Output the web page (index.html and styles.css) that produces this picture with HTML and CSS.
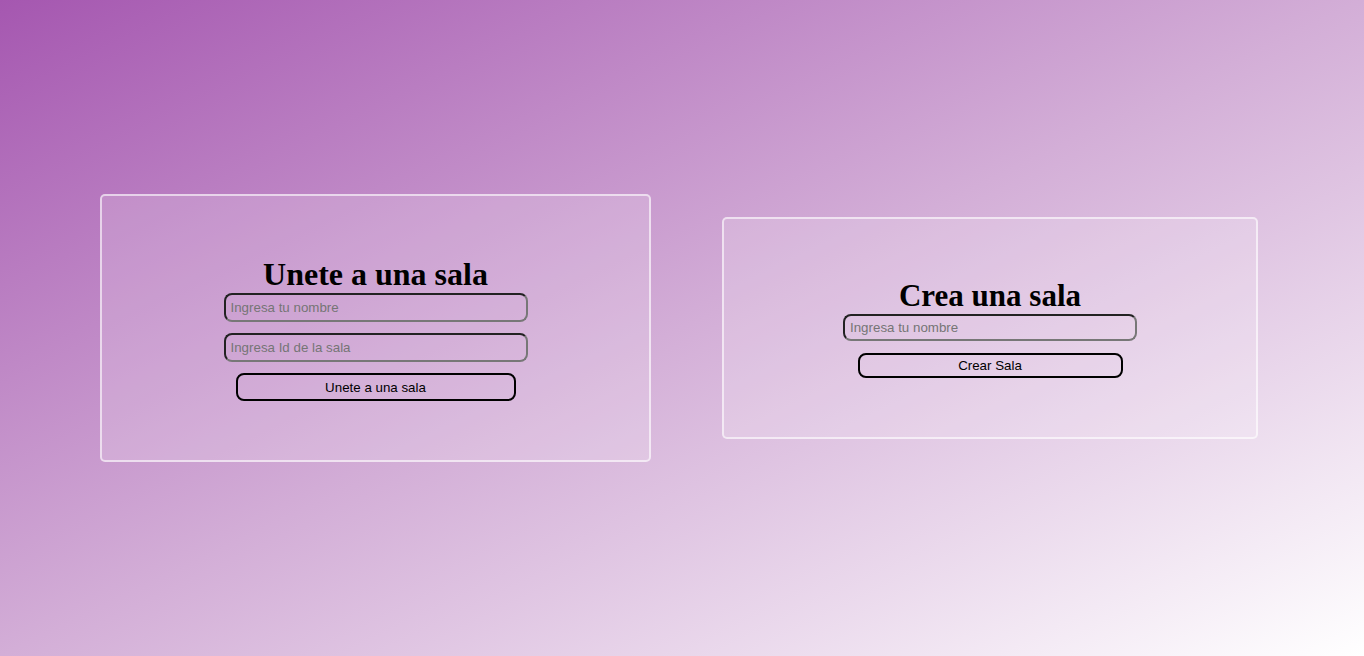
FILE: index.html
```html
<!DOCTYPE html>
<html lang="es">
<head>
<meta charset="utf-8">
<title>Salas</title>
<link rel="stylesheet" href="styles.css">
</head>
<body>
<main class="page">
  <section class="card card-join">
    <div class="card-body">
      <h1 class="card-title">Unete a una sala</h1>
      <input class="field" type="text" placeholder="Ingresa tu nombre">
      <input class="field" type="text" placeholder="Ingresa Id de la sala">
      <button class="btn" type="button">Unete a una sala</button>
    </div>
  </section>
  <section class="card card-create">
    <div class="card-body">
      <h1 class="card-title">Crea una sala</h1>
      <input class="field" type="text" placeholder="Ingresa tu nombre">
      <button class="btn" type="button">Crear Sala</button>
    </div>
  </section>
</main>
</body>
</html>
```

FILE: styles.css
```css
html, body {
  margin: 0;
  padding: 0;
  height: 100%;
}

body {
  background: linear-gradient(to bottom right, #a557b0 0%, #d3aed7 50%, #ffffff 100%);
  font-family: "Liberation Sans", Arial, sans-serif;
}

.page {
  height: 100vh;
  display: flex;
  align-items: center;
  padding-left: 100px;
  gap: 71px;
  box-sizing: border-box;
}

.card {
  box-sizing: border-box;
  border: 2px solid rgba(255, 255, 255, 0.6);
  border-radius: 5px;
  background: rgba(255, 255, 255, 0.17);
  display: flex;
  justify-content: center;
}

.card-join {
  width: 551px;
  height: 268px;
  padding-top: 60px;
}

.card-create {
  width: 536px;
  height: 222px;
  padding-top: 58px;
}

.card-body {
  display: flex;
  flex-direction: column;
  align-items: center;
}

.card-title {
  margin: 0;
  font-family: "Liberation Serif", "Times New Roman", serif;
  font-weight: bold;
  font-size: 32px;
  line-height: 37px;
  color: #000;
}

.card-create .card-title {
  font-size: 31px;
}

.field {
  box-sizing: border-box;
  background: transparent;
  border: 2px solid;
  border-color: #222 #777 #777 #222;
  border-radius: 8px;
  font-family: "Liberation Sans", Arial, sans-serif;
  font-size: 13.333px;
  color: #000;
  padding: 0 5px;
  outline: none;
}

.field::placeholder {
  color: #757575;
}

.btn {
  box-sizing: border-box;
  background: transparent;
  border: 2px solid #000;
  border-radius: 8px;
  font-family: "Liberation Sans", Arial, sans-serif;
  font-size: 13.333px;
  color: #000;
  padding: 0;
  cursor: pointer;
}

.card-join .field {
  width: 304px;
  height: 29px;
  margin-bottom: 11px;
}

.card-join .btn {
  width: 280px;
  height: 28px;
}

.card-create .field {
  width: 294px;
  height: 27px;
  margin-bottom: 12px;
}

.card-create .btn {
  width: 265px;
  height: 25px;
}
```
